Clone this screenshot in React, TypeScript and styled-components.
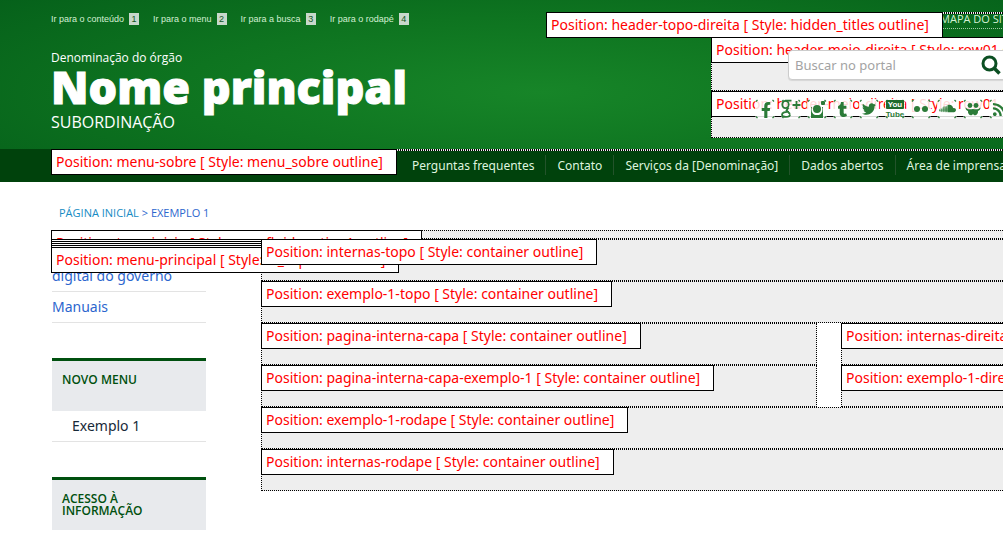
import React from 'react';
import styled, { createGlobalStyle } from 'styled-components';
import { FaFacebookF, FaTumblr, FaTwitter, FaSoundcloud, FaRss } from 'react-icons/fa';

const sans = '"Noto Sans", "Open Sans", sans-serif';
const narrow = '"Open Sans", "Noto Sans", sans-serif';

const Global = createGlobalStyle`
  *, *::before, *::after { box-sizing: border-box; }
  body { margin: 0; background: #fff; font-family: ${sans}; font-size: 14px; color: #172938; }
  a { text-decoration: none; color: #2c66ce; }
  ul { list-style: none; margin: 0; padding: 0; }
  h1, h2, p { margin: 0; }
`;

const Page = styled.div`
  overflow: hidden;
`;

const Container = styled.div`
  min-width: 1011px;
  padding-left: 51px;
`;

const Header = styled.header`
  background: radial-gradient(ellipse 720px 150px at 540px 92px, #178528 0%, #0e7420 50%, #05601a 100%);
`;

const HeaderGrid = styled(Container)`
  display: grid;
  grid-template-columns: 1fr 465px;
  padding-bottom: 11px;
`;

const SkipLinks = styled.ul`
  display: flex;
  gap: 14px;
  padding-top: 13px;
  font: 9px/12px "Liberation Sans", Arial, sans-serif;
`;

const SkipLink = styled.a`
  display: flex;
  gap: 5px;
  color: #d3f0d3;
  white-space: nowrap;
  span {
    width: 10px;
    background: #c8d8cb;
    color: #12551f;
    text-align: center;
  }
`;

const Brand = styled.div`
  margin-top: 25px;
  color: #fff;
`;

const BrandSmall = styled.p`
  font: 12px/16px ${narrow};
`;

const BrandName = styled.h1`
  font: 800 45px/42px "Open Sans", sans-serif;
  -webkit-text-stroke: 1px #fff;
  white-space: nowrap;
`;

const BrandUnit = styled.p`
  font: 16px/28px ${narrow};
`;

const HeaderSide = styled.div`
  padding-top: 12px;
`;

const Outline = styled.div<{ $h: number }>`
  position: relative;
  height: ${(p) => p.$h}px;
  border: 1px dotted #000;
  background: #eee;
`;

const Tag = styled.div`
  position: relative;
  z-index: 1;
  width: max-content;
  height: 26px;
  margin: -1px 0 0 -1px;
  padding: 0 13px 0 4px;
  border: 1px solid #000;
  background: #fff;
  color: #f00;
  font-size: 14px;
  line-height: 24px;
  white-space: nowrap;
`;

const StackedTag = styled(Tag)`
  width: 346px;
`;

type SlotProps = { name: string; look?: string; h?: number; children?: React.ReactNode };

const Slot = ({ name, look = 'container', h = 42, children }: SlotProps) => (
  <Outline $h={h}>
    <Tag>{`Position: ${name} [ Style: ${look} outline]`}</Tag>
    {children}
  </Outline>
);

const SiteMap = styled.a`
  position: absolute;
  right: -4px;
  top: -1px;
  height: 17px;
  border-bottom: 1px dotted #9fc9a5;
  && { color: #d3f0d3; }
  font: 11px/13px ${narrow};
  white-space: nowrap;
`;

const HeaderMiddle = styled.div`
  margin: 23px 0 0 165px;
`;

const Search = styled.form`
  position: absolute;
  z-index: 2;
  left: 76px;
  top: 12px;
  display: flex;
  width: 220px;
  height: 30px;
  border: 1px solid #ccc;
  border-radius: 4px;
  background: #fff;
  box-shadow: 0 1px 1px rgba(0, 0, 0, 0.1);
`;

const SearchInput = styled.input`
  width: 186px;
  border: 0;
  padding: 0 6px;
  background: none;
  font: 13px ${sans};
  outline: 0;
  &::placeholder { color: #a3a3a3; opacity: 1; }
`;

const SearchButton = styled.button`
  display: grid;
  place-items: center;
  width: 32px;
  border: 0;
  padding: 0;
  background: #fff;
`;

const Social = styled.ul`
  position: absolute;
  z-index: 2;
  left: 43px;
  top: 7px;
  display: flex;
  gap: 6px;
`;

const SocialLink = styled.a`
  display: block;
  width: 20px;
  height: 20px;
  svg { display: block; }
`;

const green = '#2b7b38';

const Tile = ({ children }: { children: React.ReactNode }) => (
  <svg width="20" height="20" viewBox="0 0 20 20">
    <path d="M3 0h14l3 3v14l-3 3H3l-3-3V3z" fill="#fff" fillOpacity=".84" />
    <path d="M1 2.500 2.500 1M17.500 1 19 2.500M1 17.500 2.500 19M17.500 19 19 17.500" stroke={green} strokeWidth="1.200" />
    {children}
  </svg>
);

const networks: { name: string; icon: React.ReactNode }[] = [
  { name: 'Facebook', icon: <FaFacebookF x="3" y="3" size={16} color={green} /> },
  {
    name: 'Google+',
    icon: (
      <g fill="none" stroke={green} strokeWidth="1.800">
        <ellipse cx="4.500" cy="5.500" rx="3.200" ry="3.600" />
        <path d="M4 1.600h6.500M7.500 8.500 5.500 11.500 9 15M9 15.500c0 3.200-8 3.200-8 .3 0-2.300 3-3.300 7-2.800M15.500 2v8M11.500 6h8" />
      </g>
    ),
  },
  {
    name: 'Instagram',
    icon: (
      <g fill={green}>
        <path fillRule="evenodd" d="M2 8h2v11H2zM16 8h2v11h-2zM2 16h16v3H2zM2 8h3a6 6 0 0 0 3 8H2zM18 8h-3a6 6 0 0 1-3 8h6z" />
        <circle cx="10" cy="10" r="4" />
        <rect x="14" y="2" width="4" height="4" rx="1" />
      </g>
    ),
  },
  { name: 'Tumblr', icon: <FaTumblr x="2" y="3" size={15} color={green} /> },
  { name: 'Twitter', icon: <FaTwitter x="3" y="3" size={14} color={green} /> },
  {
    name: 'YouTube',
    icon: (
      <g fontFamily="Liberation Sans Narrow, Liberation Sans, sans-serif" fontWeight="700" fontSize="8" textAnchor="middle">
        <rect x="1" y="1" width="18" height="9" rx="1" fill="#1f6b2c" />
        <text x="10" y="8" fill="#fff">You</text>
        <text x="10" y="18" fill={green}>Tube</text>
      </g>
    ),
  },
  { name: 'Flickr', icon: <g fill={green}><circle cx="6" cy="10" r="3" /><circle cx="14" cy="10" r="3" /></g> },
  { name: 'SoundCloud', icon: <FaSoundcloud x="2" y="1" size={17} color={green} /> },
  {
    name: 'SlideShare',
    icon: (
      <g fill={green}>
        <circle cx="7" cy="6.500" r="2.400" />
        <circle cx="13" cy="6.500" r="2.400" />
        <path d="M2.500 8.500c2 2 4 2 7.500 1.500 3.500.5 5.500.5 7.500-1.500 0 2-1 3-2.500 3.500.5 4-3.500 5.500-5 3-1.500 2.500-5.500 1-5-3-1.500-.5-2.500-1.500-2.500-3.500z" />
      </g>
    ),
  },
  { name: 'RSS', icon: <FaRss x="3" y="3" size={15} color={green} /> },
];

const MenuBar = styled.nav`
  background: #00420c;
`;

const MenuInner = styled(Container)`
  height: 33px;
`;

const MenuLinks = styled.ul`
  display: flex;
  padding: 4px 0 0 350px;
`;

const MenuItem = styled.li`
  height: 20px;
  padding: 0 11px;
  border-right: 1px solid #23532b;
  font-size: 12px;
  line-height: 22px;
  white-space: nowrap;
  a { color: #dff5df; }
`;

const Crumbs = styled.nav`
  padding: 23px 0 9px 8px;
  font: 11px/16px ${narrow};
  color: #2c66ce;
  a { color: #168bc4; }
`;

const Columns = styled.div`
  display: grid;
  grid-template-columns: 155px minmax(0, 1fr);
  gap: 55px;
  align-items: start;
`;

const SideNav = styled.ul`
  padding-left: 1px;
`;

const SideItem = styled.li<{ $first?: boolean; $nested?: boolean }>`
  padding: ${(p) => (p.$first ? '0 0 6px' : p.$nested ? '6px 0 6px 20px' : '6px 0')};
  border-bottom: 1px solid #e3e3e3;
  font-size: 14px;
  line-height: 18px;
  a { color: ${(p) => (p.$nested ? '#172938' : '#2c66ce')}; }
`;

const SideSection = styled.section`
  margin: 35px 0 0 1px;
`;

const SideTitle = styled.h2`
  height: 53px;
  padding: 13px 10px;
  border-top: 3px solid #00500f;
  background: #e8eaed;
  color: #00500f;
  font: 600 12px/12px ${narrow};
`;

const Capa = styled.div`
  display: grid;
  grid-template-columns: minmax(0, 1fr) 170px;
  gap: 24px;
`;

export default function App() {
  return (
    <Page>
      <Global />
      <Header>
        <HeaderGrid>
          <div>
            <SkipLinks>
              {['o conteúdo', 'o menu', 'a busca', 'o rodapé'].map((t, i) => (
                <li key={t}>
                  <SkipLink href="#">{`Ir para ${t}`} <span>{i + 1}</span></SkipLink>
                </li>
              ))}
            </SkipLinks>
            <Brand>
              <BrandSmall>Denominação do órgão</BrandSmall>
              <BrandName>Nome principal</BrandName>
              <BrandUnit>SUBORDINAÇÃO</BrandUnit>
            </Brand>
          </div>
          <HeaderSide>
            <Slot name="header-topo-direita" look="hidden_titles" h={2}>
              <SiteMap href="#">MAPA DO SITE</SiteMap>
            </Slot>
            <HeaderMiddle>
              <Slot name="header-meio-direita" look="row01" h={54}>
                <Search onSubmit={(e) => e.preventDefault()}>
                  <SearchInput type="text" placeholder="Buscar no portal" aria-label="Buscar no portal" />
                  <SearchButton aria-label="Buscar">
                    <svg width="20" height="20" viewBox="0 0 20 20" fill="none" stroke="#0b4f22">
                      <circle cx="8.500" cy="8.500" r="6.500" strokeWidth="3" />
                      <path d="M13.500 13.500 18.500 18.500" strokeWidth="3.500" />
                    </svg>
                  </SearchButton>
                </Search>
              </Slot>
              <Slot name="header-meio-direita" look="row01" h={47}>
                <Social>
                  {networks.map((n) => (
                    <li key={n.name}>
                      <SocialLink href="#" aria-label={n.name}><Tile>{n.icon}</Tile></SocialLink>
                    </li>
                  ))}
                </Social>
              </Slot>
            </HeaderMiddle>
          </HeaderSide>
        </HeaderGrid>
      </Header>
      <MenuBar>
        <MenuInner>
          <Slot name="menu-sobre" look="menu_sobre" h={2} />
          <MenuLinks>
            {['Perguntas frequentes', 'Contato', 'Serviços da [Denominação]', 'Dados abertos', 'Área de imprensa'].map((t) => (
              <MenuItem key={t}><a href="#">{t}</a></MenuItem>
            ))}
          </MenuLinks>
        </MenuInner>
      </MenuBar>
      <Container>
        <Crumbs><a href="#">PÁGINA INICIAL</a> &gt; EXEMPLO 1</Crumbs>
        <Slot name="topo-inicio" look="row-fluid section1" h={9} />
        <Columns>
          <aside>
            {[0, 1, 2, 3].map((i) => (
              <Outline key={i} $h={2}><StackedTag /></Outline>
            ))}
            <Slot name="menu-principal" look="rt_capa01" h={2} />
            <SideNav>
              <SideItem $first><a href="#">Identidade padrão digital do governo</a></SideItem>
              <SideItem><a href="#">Manuais</a></SideItem>
            </SideNav>
            <SideSection>
              <SideTitle>NOVO MENU</SideTitle>
              <ul><SideItem $nested><a href="#">Exemplo 1</a></SideItem></ul>
            </SideSection>
            <SideSection>
              <SideTitle>ACESSO À INFORMAÇÃO</SideTitle>
            </SideSection>
          </aside>
          <main>
            <Slot name="internas-topo" />
            <Slot name="exemplo-1-topo" />
            <Capa>
              <div>
                <Slot name="pagina-interna-capa" />
                <Slot name="pagina-interna-capa-exemplo-1" />
              </div>
              <div>
                <Slot name="internas-direita" />
                <Slot name="exemplo-1-direita" />
              </div>
            </Capa>
            <Slot name="exemplo-1-rodape" />
            <Slot name="internas-rodape" />
          </main>
        </Columns>
      </Container>
    </Page>
  );
}
